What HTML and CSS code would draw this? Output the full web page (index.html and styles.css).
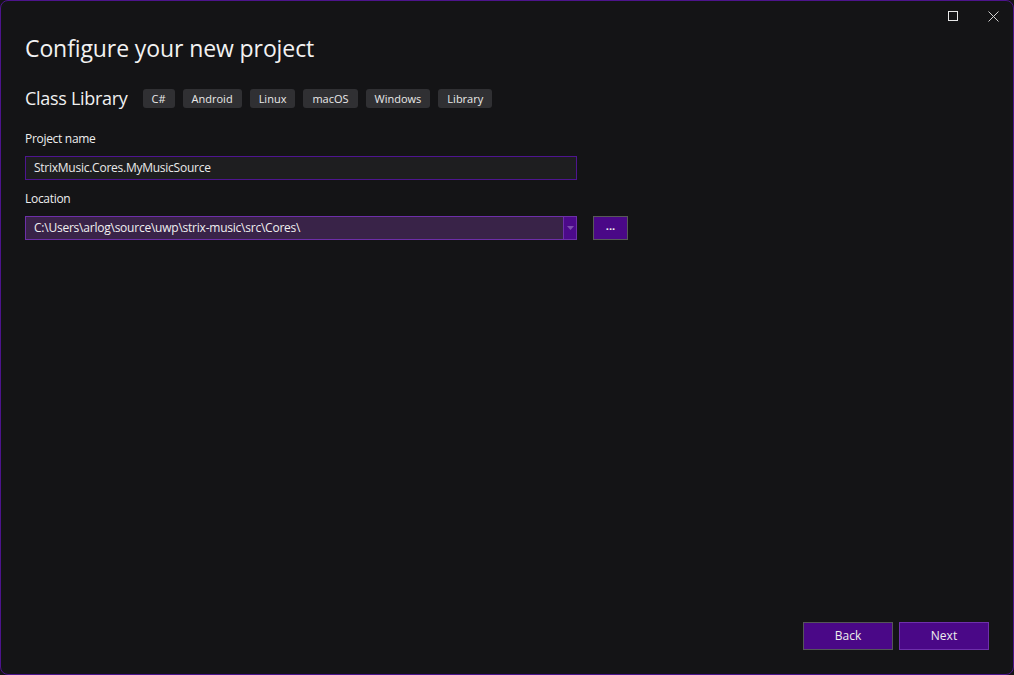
FILE: index.html
```html
<!DOCTYPE html>
<html>
<head>
<meta charset="utf-8">
<link rel="stylesheet" href="styles.css">
</head>
<body>
<div class="window">
  <div class="titlebar">
    <div class="caption-btn">
      <svg width="10" height="10" viewBox="0 0 10 10"><rect x="0.5" y="0.5" width="9" height="9" fill="none" stroke="#e8e8e8" stroke-width="1"/></svg>
    </div>
    <div class="caption-btn">
      <svg width="11" height="11" viewBox="0 0 11 11"><path d="M0.5 0.5 L10.5 10.5 M10.5 0.5 L0.5 10.5" stroke="#d0d0d0" stroke-width="1"/></svg>
    </div>
  </div>
  <div class="content">
    <h1 class="title">Configure your new project</h1>
    <div class="template-row">
      <span class="template-name">Class Library</span>
      <div class="tags">
        <span class="tag">C#</span>
        <span class="tag">Android</span>
        <span class="tag">Linux</span>
        <span class="tag">macOS</span>
        <span class="tag">Windows</span>
        <span class="tag">Library</span>
      </div>
    </div>
    <div class="field">
      <label class="label">Project name</label>
      <div class="input">StrixMusic.Cores.MyMusicSource</div>
    </div>
    <div class="field">
      <label class="label">Location</label>
      <div class="location-row">
        <div class="combo">
          <span class="combo-text">C:\Users\arlog\source\uwp\strix-music\src\Cores\</span>
          <span class="combo-btn">
            <svg width="7" height="4" viewBox="0 0 7 4"><path d="M0 0 H7 L3.5 4 Z" fill="#7d4fae"/></svg>
          </span>
        </div>
        <div class="browse">...</div>
      </div>
    </div>
  </div>
  <div class="footer">
    <div class="btn btn-back">Back</div>
    <div class="btn btn-next">Next</div>
  </div>
</div>
</body>
</html>
```
FILE: styles.css
```css
* { box-sizing: border-box; }
html, body {
  margin: 0;
  padding: 0;
  background: #141416;
}
body {
  width: 1014px;
  height: 675px;
  font-family: "Open Sans", "Noto Sans", sans-serif;
  color: #f0f0f0;
}
.window {
  width: 1014px;
  height: 675px;
  border: 1px solid #4d148c;
  border-radius: 8px;
  background: #141416;
  display: flex;
  flex-direction: column;
  overflow: hidden;
}
.titlebar {
  height: 29px;
  display: flex;
  justify-content: flex-end;
  align-items: center;
  padding-right: 0;
  padding-top: 1px;
}
.caption-btn {
  width: 40px;
  height: 28px;
  display: flex;
  align-items: center;
  justify-content: center;
}
.content {
  flex: 1;
  padding: 0 24px;
}
.title {
  margin: 0;
  font-size: 23px;
  font-weight: 400;
  line-height: 36px;
  letter-spacing: -0.1px;
  color: #f2f2f2;
}
.template-row {
  display: flex;
  align-items: center;
  margin-top: 23px;
  height: 19px;
}
.template-name {
  font-size: 18px;
  letter-spacing: -0.3px;
  margin-right: 15px;
  line-height: 19px;
}
.tags {
  display: flex;
  gap: 8px;
}
.tag {
  background: #303033;
  border-radius: 3px;
  font-size: 11px;
  height: 19px;
  line-height: 19px;
  padding: 0 9px;
  color: #eaeaea;
}
.field {
  margin-top: 10px;
}
.template-row + .field { margin-top: 22px; }
.label {
  display: block;
  font-size: 12px;
  line-height: 18px;
  letter-spacing: -0.3px;
  color: #eeeeee;
  margin-bottom: 8px;
}
.input {
  width: 552px;
  height: 24px;
  border: 1px solid #4e158f;
  background: #1e1e20;
  font-size: 12px;
  line-height: 22px;
  letter-spacing: -0.25px;
  padding-left: 8px;
  color: #eaeaea;
}
.location-row {
  display: flex;
  align-items: center;
  gap: 16px;
}
.combo {
  width: 552px;
  height: 24px;
  border: 1px solid #6d2fa8;
  background: #392348;
  display: flex;
  align-items: stretch;
}
.combo-text {
  flex: 1;
  font-size: 12px;
  line-height: 22px;
  letter-spacing: -0.23px;
  padding-left: 8px;
  color: #f0f0f0;
}
.combo-btn {
  width: 13px;
  border-left: 1px solid #6d2fa8;
  background: #4c0a8a;
  display: flex;
  align-items: center;
  justify-content: center;
}
.browse {
  width: 35px;
  height: 24px;
  background: #4a0887;
  border: 1px solid #585858;
  color: #f0f0f0;
  font-size: 11px;
  font-weight: 700;
  text-align: center;
  line-height: 18px;
}
.footer {
  display: flex;
  justify-content: flex-end;
  gap: 6px;
  padding: 0 24px 24px 0;
}
.btn {
  width: 90px;
  height: 28px;
  background: #4a0887;
  font-size: 12px;
  line-height: 26px;
  text-align: center;
  color: #eeeeee;
}
.btn-back { border: 1px solid #555558; }
.btn-next { border: 1px solid #6e30ab; }
```
